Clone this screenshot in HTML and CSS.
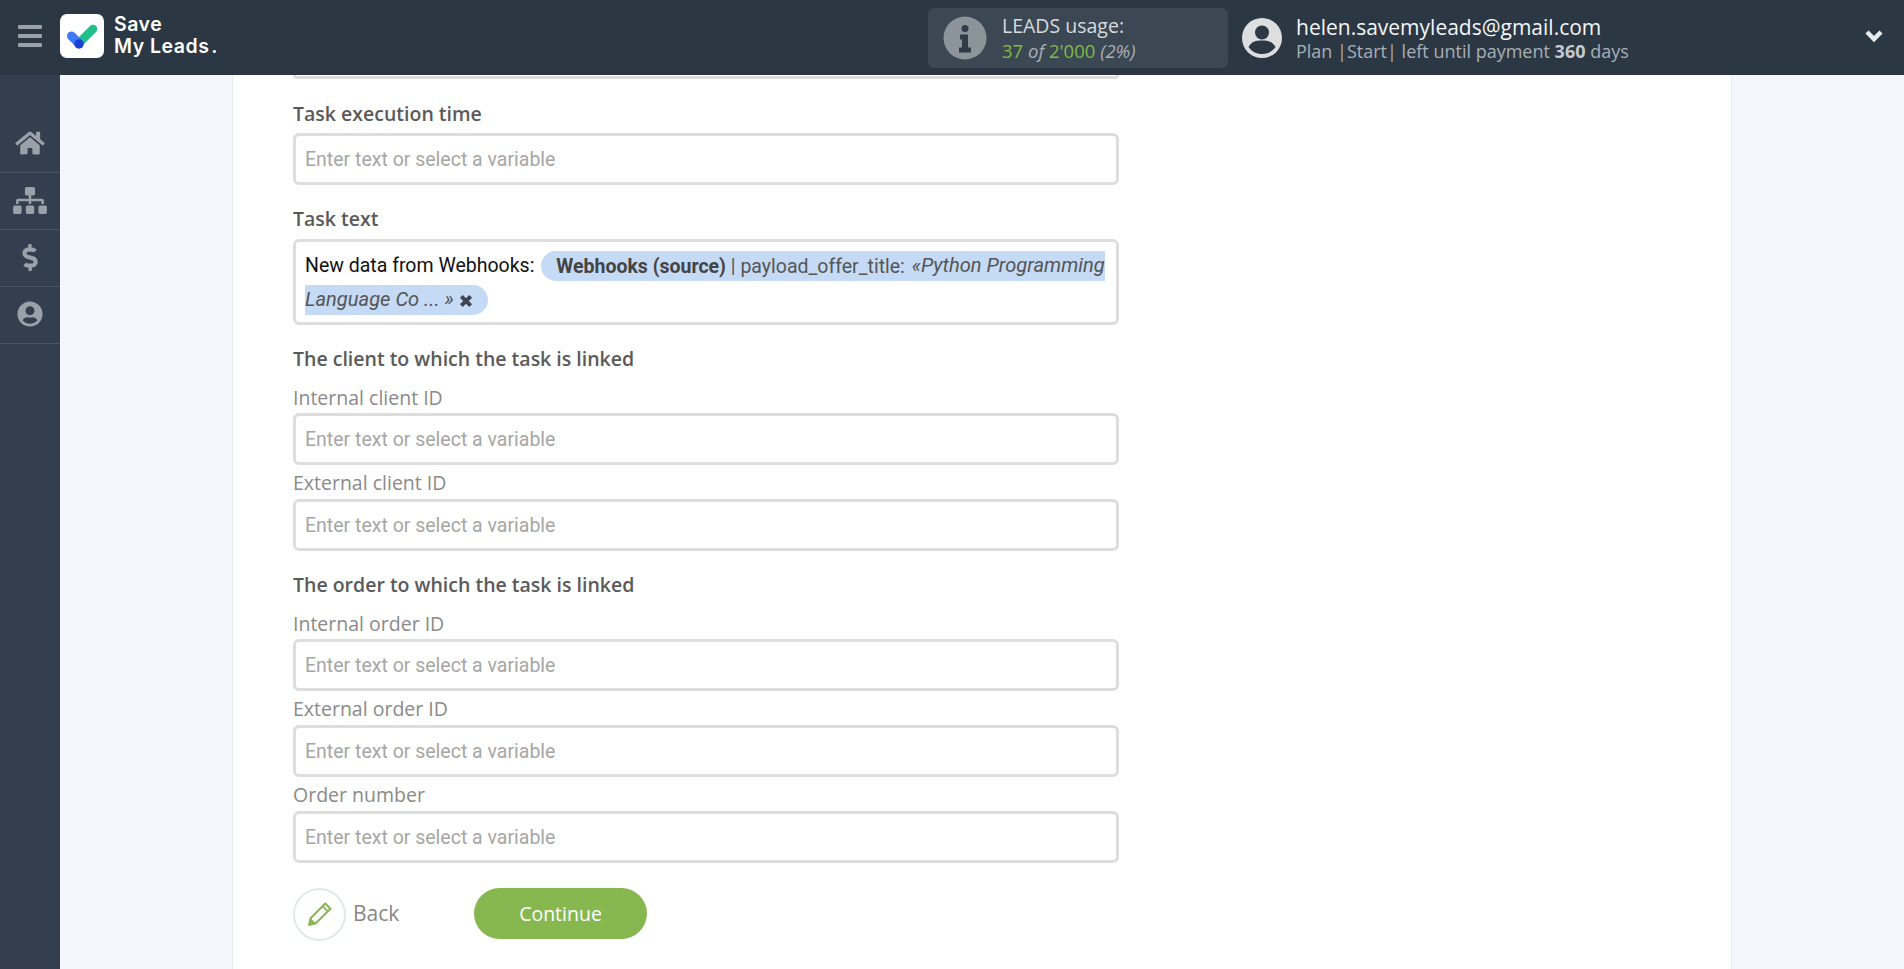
FILE: index.html
```html
<!DOCTYPE html>
<html lang="en">
<head>
<meta charset="utf-8">
<title>Save My Leads</title>
<link rel="stylesheet" href="styles.css">
</head>
<body>
<header class="topbar">
  <div class="burger"><span></span><span></span><span></span></div>
  <div class="logo">
    <svg viewBox="0 0 44 44" width="44" height="44"><rect width="44" height="44" rx="7" fill="#fff"/><path d="M33 15L21 27" stroke="#22bf8a" stroke-width="8.500" stroke-linecap="round"/><path d="M11.500 22L19 29.500" stroke="#4079f5" stroke-width="9" stroke-linecap="round"/><circle cx="19" cy="30" r="4.700" fill="#1c3fd6"/></svg>
  </div>
  <div class="brand">Save<br>My Leads<span class="brand-dot">.</span></div>
  <div class="usage">
    <svg class="info" viewBox="0 0 44 44" width="44" height="44"><circle cx="22" cy="22" r="21.500" fill="#8a9499"/><circle cx="22" cy="12.500" r="3.500" fill="#2f3b47"/><path d="M17 18.500h8v13h3v5H16v-5h3v-8h-2z" fill="#2f3b47"/></svg>
    <div class="usage-text">
      <div class="usage-title">LEADS usage:</div>
      <div class="usage-line"><span class="green">37</span> <i>of</i> <span class="green">2'000</span> <i>(2%)</i></div>
    </div>
  </div>
  <svg class="avatar" viewBox="0 0 40 40" width="40" height="40"><circle cx="20" cy="20" r="20" fill="#dcdee0"/><circle cx="20" cy="14.500" r="7" fill="#2d3845"/><path d="M6.500 29c3-5.500 7-6.500 13.500-6.500S30.500 23.500 33.500 29c-3 4.500-8 7-13.500 7s-10.500-2.500-13.500-7z" fill="#2d3845"/></svg>
  <div class="account">
    <div class="email">helen.savemyleads@gmail.com</div>
    <div class="plan">Plan |Start| left until payment <b>360</b> days</div>
  </div>
  <svg class="chevron" viewBox="0 0 20 14" width="20" height="14"><path d="M3 3l7 7 7-7" fill="none" stroke="#e8ebee" stroke-width="4.500"/></svg>
</header>
<div class="layout">
  <nav class="sidebar">
    <a class="nav-item"><svg viewBox="0 0 576 512" width="30" height="26"><path fill="#9aa1a8" d="M280 148L96 300v164c0 9 7 16 16 16l112-.3c9 0 16-7 16-16V368c0-9 7-16 16-16h64c9 0 16 7 16 16v96c0 9 7 16 16 16l112 .3c9 0 16-7 16-16V300L296 148c-5-4-11-4-16 0zM572 251l-84-69V44c0-7-5-12-12-12h-56c-7 0-12 5-12 12v72l-89-74c-18-14-43-14-61 0L4 251c-5 4-6 12-2 17l26 31c4 5 12 6 17 2L280 107c5-4 11-4 16 0l235 194c5 4 13 3 17-2l26-31c4-5 3-13-2-17z"/></svg></a>
    <a class="nav-item"><svg viewBox="0 0 640 512" width="34" height="27"><path fill="#9aa1a8" d="M128 352H32c-18 0-32 14-32 32v96c0 18 14 32 32 32h96c18 0 32-14 32-32v-96c0-18-14-32-32-32zm-24-80h192v48h48v-48h192v48h48v-57c0-21-17-39-39-39H344v-64h40c18 0 32-14 32-32V32c0-18-14-32-32-32H256c-18 0-32 14-32 32v96c0 18 14 32 32 32h40v64H95c-21 0-39 18-39 39v57h48v-48zm264 80h-96c-18 0-32 14-32 32v96c0 18 14 32 32 32h96c18 0 32-14 32-32v-96c0-18-14-32-32-32zm240 0h-96c-18 0-32 14-32 32v96c0 18 14 32 32 32h96c18 0 32-14 32-32v-96c0-18-14-32-32-32z"/></svg></a>
    <a class="nav-item"><svg viewBox="0 0 288 512" width="16" height="27"><path fill="#9aa1a8" d="M209 233l-108-31c-12-4-21-15-21-28 0-16 13-29 29-29h66c12 0 24 4 34 10 6 4 14 3 19-2l35-34c7-7 6-19-2-25-25-19-55-30-86-30V16c0-9-7-16-16-16h-32c-9 0-16 7-16 16v48h-2C45 64-8 120 1 185c6 46 41 83 85 96l103 30c12 4 21 15 21 28 0 16-13 29-29 29h-66c-12 0-24-4-34-10-6-4-14-3-19 2l-35 34c-7 7-6 19 2 25 25 19 55 30 86 30v48c0 9 7 16 16 16h32c9 0 16-7 16-16v-48c47-1 90-29 105-73 22-62-15-126-75-143z"/></svg></a>
    <a class="nav-item"><svg viewBox="0 0 496 512" width="26" height="26"><path fill="#9aa1a8" d="M248 8C111 8 0 119 0 256s111 248 248 248 248-111 248-248S385 8 248 8zm0 96c49 0 88 39 88 88s-39 88-88 88-88-39-88-88 39-88 88-88zm0 344c-59 0-111-27-146-69 19-35 55-59 98-59 2 0 5 0 7 1 13 4 27 7 41 7s28-3 41-7c2-1 5-1 7-1 43 0 79 24 98 59-35 42-87 69-146 69z"/></svg></a>
  </nav>
  <main class="content">
    <section class="card">
      <div class="form">
        <div class="stub"></div>
        <div class="label strong first">Task execution time</div>
        <div class="input">Enter text or select a variable</div>
        <div class="label strong task-label">Task text</div>
        <div class="input textarea">New data from Webhooks: <span class="tag"><b>Webhooks (source)</b> | payload_offer_title: <i>«Python Programming Language Co ... »</i> <svg class="tag-x" viewBox="0 0 12 12" width="14" height="14"><path d="M2 2l8 8M10 2l-8 8" stroke="#3f4650" stroke-width="3.400"/></svg></span></div>
        <div class="label strong group">The client to which the task is linked</div>
        <div class="label sub sub-first">Internal client ID</div>
        <div class="input">Enter text or select a variable</div>
        <div class="label sub">External client ID</div>
        <div class="input">Enter text or select a variable</div>
        <div class="label strong group">The order to which the task is linked</div>
        <div class="label sub sub-first">Internal order ID</div>
        <div class="input">Enter text or select a variable</div>
        <div class="label sub">External order ID</div>
        <div class="input">Enter text or select a variable</div>
        <div class="label sub">Order number</div>
        <div class="input">Enter text or select a variable</div>
        <div class="actions">
          <a class="back"><span class="back-circle"><svg viewBox="0 0 24 24" width="25" height="25"><path d="M2 22l1.500-6.500L17.500 1.500l5 5L8.500 20.500z" fill="none" stroke="#86b84f" stroke-width="2" stroke-linejoin="round"/><path d="M2 22l1.500-6.500 5 5z" fill="#86b84f"/><path d="M15 4l5 5" stroke="#86b84f" stroke-width="1.800"/></svg></span><span class="back-text">Back</span></a>
          <a class="continue">Continue</a>
        </div>
      </div>
    </section>
  </main>
</div>
</body>
</html>
```

FILE: styles.css
```css
* { box-sizing: border-box; }
html, body { margin: 0; height: 100%; overflow: hidden; }
body { font-family: "Open Sans", sans-serif; background: #f3f7fc; color: #555; }
.topbar { height: 75px; background: #2c3744; display: flex; align-items: center; }
.burger { width: 60px; display: flex; flex-direction: column; gap: 5px; align-items: center; flex: none; margin-bottom: 3px; }
.burger span { display: block; width: 24px; height: 4px; background: #9aa1a8; border-radius: 1px; }
.logo { width: 44px; height: 44px; flex: none; margin-bottom: 3px; }
.logo svg { display: block; }
.brand { font-family: "Inter", sans-serif; font-weight: 600; font-size: 19.500px; line-height: 22px; color: #fff; margin-left: 10px; margin-bottom: 5px; letter-spacing: 0.5px; width: 814px; flex: none; }
.brand-dot { margin-left: 2px; }
.usage { width: 300px; height: 60px; background: #3b4853; border-radius: 6px; display: flex; align-items: center; padding-left: 15px; flex: none; }
.info { flex: none; }
.usage-text { margin-left: 15px; font-size: 19.500px; line-height: 24px; color: #d8dcdf; }
.usage-line { color: #a9b0b6; font-size: 18.500px; line-height: 23px; margin-top: 1px; }
.usage-line i { font-style: italic; }
.green { color: #7fba44; }
.avatar { margin-left: 14px; flex: none; }
.account { margin-left: 14px; flex: 1; margin-bottom: 1px; }
.email { font-size: 21px; line-height: 27px; color: #f3f5f7; }
.plan { font-size: 18px; line-height: 20px; color: #a8afb5; }
.plan b { font-weight: 700; color: #c6cace; }
.chevron { margin-right: 20px; margin-bottom: 3px; flex: none; }
.layout { display: flex; height: calc(100vh - 75px); }
.sidebar { width: 60px; background: #333f4e; padding-top: 41px; flex: none; }
.nav-item { display: flex; align-items: center; justify-content: center; height: 57px; padding-bottom: 2px; border-bottom: 1px solid #4a5562; }
.nav-item svg { display: block; }
.content { flex: 1; padding-left: 172px; padding-right: 172px; }
.card { background: #fff; height: 100%; border-left: 1px solid #e8ecf0; border-right: 1px solid #e8ecf0; padding-left: 60px; }
.form { width: 826px; }
.stub { height: 4px; border: 3px solid #ddd; border-top: 0; border-radius: 0 0 5px 5px; }
.label { font-size: 19.500px; line-height: 24px; }
.strong { font-weight: 600; color: #5a5a5a; }
.sub { color: #8a8a8a; margin-top: 6px; margin-bottom: 4px; }
.first { margin-top: 23px; margin-bottom: 7px; }
.task-label { margin-top: 22px; margin-bottom: 8px; }
.group { margin-top: 22px; }
.sub-first { margin-top: 15px; margin-bottom: 3px; }
.input { height: 52px; border: 3px solid #ddd; border-radius: 6px; background: #fff; padding: 1px 9px 0; font-family: "Roboto", sans-serif; font-size: 19.500px; line-height: 46px; color: #a6a6a6; white-space: nowrap; overflow: hidden; }
.textarea { height: 86px; line-height: 34px; white-space: normal; color: #111; padding: 7px 9px 0; }
.tag { background: #c5daf5; color: #555; padding: 3.500px 0 3.500px 15px; margin-left: 2px; border-radius: 15px; }
.tag b { font-weight: 700; color: #444; }
.tag i { font-style: italic; font-size: 20.100px; line-height: 1; margin-left: 2px; }
.tag-x { margin-right: 15px; vertical-align: -2px; }
.actions { display: flex; align-items: flex-start; margin-top: 25px; }
.back { display: flex; align-items: center; color: #888; font-size: 21px; width: 181px; }
.back-circle { width: 53px; height: 53px; border: 2px solid #e1eaea; border-radius: 50%; display: flex; align-items: center; justify-content: center; margin-right: 7px; }
.back-text { margin-bottom: 3px; }
.continue { width: 173px; height: 51px; background: #86b84f; color: #fff; border-radius: 26px; font-size: 19.500px; display: flex; align-items: center; justify-content: center; }
```
